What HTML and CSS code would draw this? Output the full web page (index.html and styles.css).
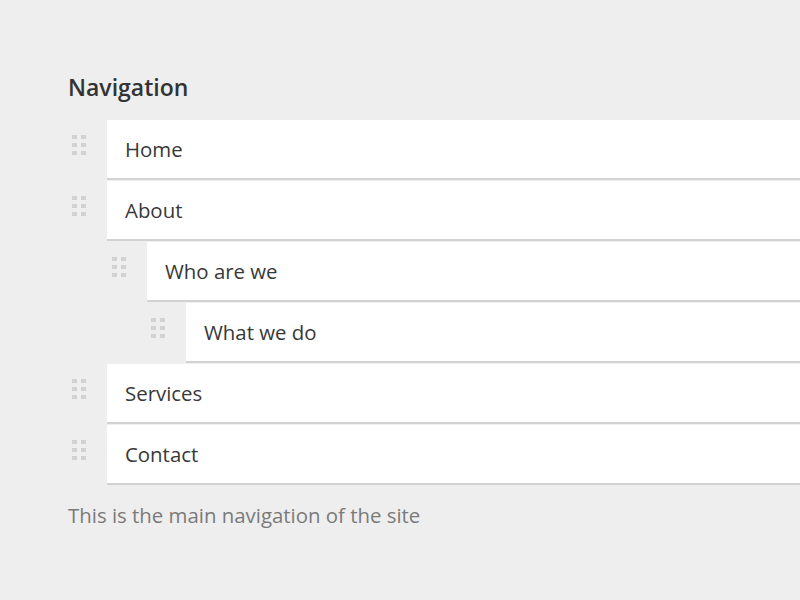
FILE: index.html
```html
<!DOCTYPE html>
<html>
<head>
<meta charset="utf-8">
<link rel="stylesheet" href="styles.css">
</head>
<body>
<div class="panel">
  <h2 class="title">Navigation</h2>
  <ul class="tree">
    <li><div class="row"><span class="handle"><i></i><i></i><i></i><i></i><i></i><i></i></span><div class="card">Home</div></div></li>
    <li><div class="row"><span class="handle"><i></i><i></i><i></i><i></i><i></i><i></i></span><div class="card">About</div></div>
      <ul class="tree sub">
        <li><div class="row"><span class="handle"><i></i><i></i><i></i><i></i><i></i><i></i></span><div class="card">Who are we</div></div>
          <ul class="tree sub">
            <li><div class="row"><span class="handle"><i></i><i></i><i></i><i></i><i></i><i></i></span><div class="card">What we do</div></div></li>
          </ul>
        </li>
      </ul>
    </li>
    <li><div class="row"><span class="handle"><i></i><i></i><i></i><i></i><i></i><i></i></span><div class="card">Services</div></div></li>
    <li><div class="row"><span class="handle"><i></i><i></i><i></i><i></i><i></i><i></i></span><div class="card">Contact</div></div></li>
  </ul>
  <p class="hint">This is the main navigation of the site</p>
</div>
</body>
</html>
```
FILE: styles.css
```css
html, body {
  margin: 0;
  padding: 0;
  background: #eeeeee;
  overflow: hidden;
}
body {
  font-family: "Open Sans", "Noto Sans", sans-serif;
  color: #383838;
  width: 800px;
  height: 600px;
}
.panel {
  padding: 72px 0 0 68px;
}
.title {
  margin: 0 0 18px 0;
  font-size: 23px;
  font-weight: 600;
  line-height: 30px;
  color: #333;
}
.tree {
  list-style: none;
  margin: 0;
  padding: 0;
}
.tree.sub {
  margin-left: 40px;
}
.tree.sub .tree.sub {
  margin-left: 39px;
}
.row {
  display: flex;
  align-items: flex-start;
  margin-bottom: 1px;
}
.handle {
  display: grid;
  grid-template-columns: 5px 5px;
  grid-auto-rows: 4px;
  column-gap: 4px;
  row-gap: 4px;
  margin: 15px 21px 0 4px;
  flex: none;
}
.handle i {
  display: block;
  background: #d2d2d2;
}
.card {
  flex: 1;
  background: #ffffff;
  height: 58px;
  line-height: 58px;
  border-bottom: 2px solid #d2d2d2;
  padding-left: 18px;
  font-size: 20.4px;
  margin-right: -20px;
}
.hint {
  margin: 15px 0 0 0;
  font-size: 20.4px;
  color: #7a7a7a;
  line-height: 30px;
}
```
